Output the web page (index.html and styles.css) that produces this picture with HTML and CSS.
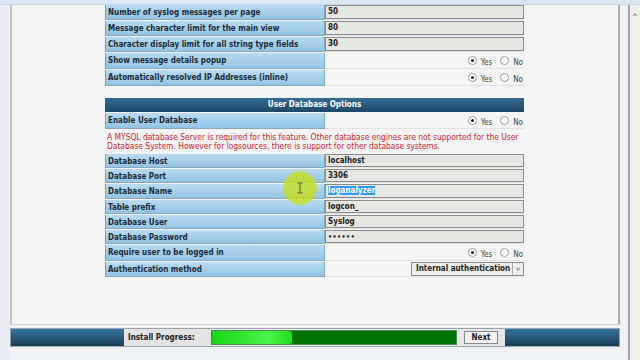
FILE: index.html
```html
<!DOCTYPE html>
<html>
<head>
<meta charset="utf-8">
<title>LogAnalyzer Install - Step 3</title>
<link rel="stylesheet" href="styles.css">
</head>
<body>
<div class="chromeTop"></div>
<div class="frame">
	<div class="gutter"></div>
	<div class="main">
		<div class="page">
			<div class="settings">
				<div class="row">
					<div class="label">Number of syslog messages per page</div>
					<div class="value"><span class="field">50</span></div>
				</div>
				<div class="row">
					<div class="label">Message character limit for the main view</div>
					<div class="value"><span class="field">80</span></div>
				</div>
				<div class="row">
					<div class="label">Character display limit for all string type fields</div>
					<div class="value"><span class="field">30</span></div>
				</div>
				<div class="row radioRow">
					<div class="label">Show message details popup</div>
					<div class="value">
						<span class="radio checked"></span><span class="opt">Yes</span>
						<span class="radio"></span><span class="opt">No</span>
					</div>
				</div>
				<div class="row radioRow">
					<div class="label">Automatically resolved IP Addresses (inline)</div>
					<div class="value">
						<span class="radio checked"></span><span class="opt">Yes</span>
						<span class="radio"></span><span class="opt">No</span>
					</div>
				</div>

				<div class="sectionHead">User Database Options</div>
				<div class="row radioRow">
					<div class="label">Enable User Database</div>
					<div class="value">
						<span class="radio checked"></span><span class="opt">Yes</span>
						<span class="radio"></span><span class="opt">No</span>
					</div>
				</div>
				<div class="notice">A MYSQL database Server is required for this feature. Other database engines are not supported for the User<br>Database System. However for logsources, there is support for other database systems.</div>
				<div class="row dbRow">
					<div class="label">Database Host</div>
					<div class="value"><span class="field">localhost</span></div>
				</div>
				<div class="row dbRow">
					<div class="label">Database Port</div>
					<div class="value"><span class="field">3306</span></div>
				</div>
				<div class="row dbRow">
					<div class="label">Database Name</div>
					<div class="value"><span class="field"><span class="selected">loganalyzer</span></span></div>
				</div>
				<div class="row dbRow">
					<div class="label">Table prefix</div>
					<div class="value"><span class="field">logcon_</span></div>
				</div>
				<div class="row dbRow">
					<div class="label">Database User</div>
					<div class="value"><span class="field">Syslog</span></div>
				</div>
				<div class="row dbRow">
					<div class="label">Database Password</div>
					<div class="value"><span class="field dots">&bull;&bull;&bull;&bull;&bull;&bull;</span></div>
				</div>
				<div class="row radioRow">
					<div class="label">Require user to be logged in</div>
					<div class="value">
						<span class="radio checked"></span><span class="opt">Yes</span>
						<span class="radio"></span><span class="opt">No</span>
					</div>
				</div>
				<div class="row">
					<div class="label">Authentication method</div>
					<div class="value"><span class="select">Internal authentication<span class="arrow">v</span></span></div>
				</div>
			</div>
			<!-- mouse pointer highlight -->
			<div class="cursorSpot">
				<svg width="8" height="12" viewBox="0 0 8 12"><path d="M1 1h6M4 1v10M1 11h6" stroke="#6a6a40" stroke-width="1.2" fill="none"/></svg>
			</div>
		</div>
		<div class="installBar">
			<div class="blueCap"></div>
			<div class="barLabel">Install Progress:</div>
			<div class="progress"><div class="done"></div></div>
			<div class="nextCell"><span class="nextBtn">Next</span></div>
			<div class="blueCap rest"></div>
		</div>
	</div>
	<div class="rightGap"></div>
	<div class="scrollbar"><span class="up">&#94;</span></div>
</div>
</body>
</html>
```

FILE: styles.css
```css
body{
	margin:0;
	width:640px;
	height:360px;
	overflow:hidden;
	background:#eef1f6;
	font-family:"DejaVu Sans Condensed","DejaVu Sans",sans-serif;
}
.chromeTop{
	height:4px;
	background:#d9e7f5;
	border-bottom:1px solid #c8d8ea;
}
.frame{
	display:flex;
	height:355px;
}
.gutter{
	width:10px;
	background:#eaeef4;
}
.main{
	width:610px;
	display:flex;
	flex-direction:column;
}
.page{
	height:319px;
	background:#f4f4f4;
	border-left:2px solid #c2c2c2;
	border-right:2px solid #adadad;
	border-bottom:1px solid #d2d2d2;
	position:relative;
	overflow:hidden;
}
.settings{
	margin-left:93px;
	width:419px;
}
.row{
	display:flex;
	height:15px;
	margin-bottom:1px;
}
.radioRow{
	height:16px;
}
.dbRow{
	height:14.2px;
}
.row>.label{
	padding-left:2px;
	background:linear-gradient(#b9dbf0,#93c4e4);
	border-left:1px solid #7c9fb8;
	border-right:1px solid #7fa9c8;
	border-bottom:1px solid #8aa7bb;
	box-sizing:border-box;
	width:220px;
	font-size:8px;
	font-weight:bold;
	color:#1c2b38;
	line-height:15px;
	white-space:nowrap;
}
.row>.value{
	flex:1;
	display:flex;
	align-items:center;
	justify-content:flex-end;
	border-bottom:1px solid #e2e2e2;
	font-size:8px;
}
.field{
	flex:1;
	height:100%;
	box-sizing:border-box;
	border:1px solid #8c8c8c;
	background:#e6e6e2;
	padding-left:2px;
	font-weight:bold;
	color:#222;
	line-height:12px;
	font-size:8px;
}
.dots{
	font-size:7px;
	letter-spacing:0.5px;
}
.selected{
	background:#3399ff;
	color:#fff;
}
.radio{
	width:9px;
	height:9px;
	border:1px solid #9a9a9a;
	border-radius:50%;
	background:#fff;
	box-sizing:border-box;
	position:relative;
	margin-right:4px;
}
.radio.checked:after{
	content:"";
	position:absolute;
	left:2px;
	top:2px;
	width:3px;
	height:3px;
	border-radius:50%;
	background:#111;
}
.opt{
	color:#444;
	margin-right:8px;
	margin-top:3px;
}
.opt:last-child{
	margin-right:1px;
}
.sectionHead{
	margin-top:12px;
	margin-bottom:1px;
	height:14px;
	background:linear-gradient(#336c94,#1d4767);
	color:#fff;
	font-size:8px;
	font-weight:bold;
	text-align:center;
	line-height:14px;
}
.notice{
	height:23px;
	box-sizing:border-box;
	padding:3px 2px 0;
	color:#d3232c;
	font-size:8.4px;
	line-height:9px;
	margin-bottom:1px;
	white-space:nowrap;
}
.select{
	width:113px;
	height:100%;
	box-sizing:border-box;
	border:1px solid #8c8c8c;
	background:#eeeeea;
	font-weight:bold;
	color:#222;
	padding-left:4px;
	line-height:12px;
	display:flex;
	justify-content:space-between;
}
.arrow{
	width:10px;
	border-left:1px solid #aaa;
	text-align:center;
	font-weight:normal;
	font-size:7px;
	color:#555;
}
.cursorSpot{
	position:absolute;
	left:271px;
	top:166px;
	width:34px;
	height:34px;
	border-radius:50%;
	background:radial-gradient(circle,rgba(196,222,40,0.85) 60%,rgba(196,222,40,0.2) 100%);
	display:flex;
	align-items:center;
	justify-content:center;
}
.installBar{
	margin-top:3px;
	height:19px;
	display:flex;
	border:1px solid #9aa3ab;
	box-sizing:border-box;
}
.blueCap{
	width:113px;
	background:linear-gradient(#33739c,#1b3e56);
}
.blueCap.rest{
	flex:1;
	width:auto;
}
.barLabel{
	width:87px;
	background:#e3e3e3;
	font-size:8px;
	font-weight:bold;
	color:#222;
	line-height:17px;
	padding-left:4px;
	box-sizing:border-box;
}
.progress{
	width:246px;
	margin:1px 0;
	background:#007400;
	border:1px solid #4a8a4a;
	box-sizing:border-box;
}
.progress>.done{
	width:80px;
	height:100%;
	background:linear-gradient(90deg,#18d618,#4cf24c 70%,#20e020);
	border-radius:0 3px 3px 0;
}
.nextCell{
	width:48px;
	background:#e6e6e6;
	display:flex;
	align-items:center;
	justify-content:center;
}
.nextBtn{
	width:34px;
	height:13px;
	box-sizing:border-box;
	border:1px solid #8a8a8a;
	background:#f2f2f2;
	font-size:8px;
	font-weight:bold;
	text-align:center;
	line-height:11px;
	color:#222;
}
.rightGap{
	width:8px;
	background:#eef2f7;
}
.scrollbar{
	flex:1;
	border-left:2px solid #a6a6a6;
	background:#efefef;
	text-align:center;
}
.scrollbar>.up{
	font-size:8px;
	color:#555;
	line-height:16px;
}
```
